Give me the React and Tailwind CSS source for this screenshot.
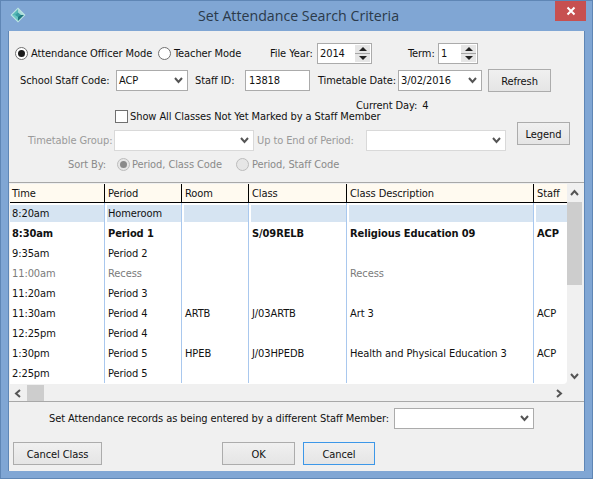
const Chev = ({ dir = "down", color = "#555" }) => {
  const p = { down: "M1 2 L4.5 6 L8 2", up: "M1 6 L4.5 2 L8 6", left: "M6 1 L2 4.5 L6 8", right: "M3 1 L7 4.5 L3 8" }[dir];
  return (
    <svg width="9" height="9" viewBox="0 0 9 9" className="shrink-0">
      <path d={p} fill="none" stroke={color} strokeWidth="2" />
    </svg>
  );
};
const Select = ({ w, value, disabled, className = "" }) => (
  <div className={`h-[21px] flex items-center justify-between shrink-0 bg-white border pl-[2px] pr-[4px] ${disabled ? "border-[#d9d9d9]" : "border-[#ababab]"} ${w} ${className}`}>
    <span>{value}</span>
    <Chev />
  </div>
);
const Btn = ({ w, h = "h-[23px]", children, className = "", blue }) => (
  <div className={`${w} ${h} shrink-0 flex items-center justify-center pt-[2px] border bg-gradient-to-b from-[#f0f0f0] to-[#e5e5e5] ${blue ? "border-[#3c97e8]" : "border-[#acacac]"} ${className}`}>{children}</div>
);
const Radio = ({ on, disabled }) => (
  <span className={`w-[13px] h-[13px] rounded-full border shrink-0 flex items-center justify-center ${disabled ? "border-[#bcbcbc] bg-[#e6e6e6]" : "border-[#707070] bg-white"}`}>
    {on && <span className={`w-[7px] h-[7px] rounded-full ${disabled ? "bg-[#8a8a8a]" : "bg-[#1a1a1a]"}`} />}
  </span>
);
const Spin = ({ w, value, className = "" }) => (
  <div className={`h-[21px] ${w} ${className} shrink-0 border border-[#ababab] bg-white flex items-center justify-between pl-[2px] pr-[1px]`}>
    <span>{value}</span>
    <div className="w-[15px] h-[17px] bg-[#e6e6e6] flex flex-col">
      <div className="h-[8px] flex items-center justify-center"><span className="w-0 h-0 border-x-[4px] border-x-transparent border-b-[4px] border-b-[#222]" /></div>
      <div className="h-px bg-[#a5a5a5]" />
      <div className="h-[8px] flex items-center justify-center"><span className="w-0 h-0 border-x-[4px] border-x-transparent border-t-[4px] border-t-[#222]" /></div>
    </div>
  </div>
);

const cols = ["w-[95px]", "w-[77px]", "w-[67px]", "w-[98px]", "w-[187px]", "w-[34px]"];
const heads = ["Time", "Period", "Room", "Class", "Class Description", "Staff"];
const rows = [
  { c: ["8:20am", "Homeroom", "", "", "", ""], hl: true },
  { c: ["8:30am", "Period 1", "", "S/09RELB", "Religious Education 09", "ACP"], b: true },
  { c: ["9:35am", "Period 2", "", "", "", ""] },
  { c: ["11:00am", "Recess", "", "", "Recess", ""], g: true },
  { c: ["11:20am", "Period 3", "", "", "", ""] },
  { c: ["11:30am", "Period 4", "ARTB", "J/03ARTB", "Art 3", "ACP"] },
  { c: ["12:25pm", "Period 4", "", "", "", ""] },
  { c: ["1:30pm", "Period 5", "HPEB", "J/03HPEDB", "Health and Physical Education 3", "ACP"] },
  { c: ["2:25pm", "Period 5", "", "", "", ""] },
];

export default function App() {
  return (
    <div className="w-[593px] h-[479px] bg-[#80a6d4] border border-[#5f86b5] flex flex-col text-[#111] text-[11px] tracking-[-0.09px] leading-none overflow-hidden whitespace-nowrap [font-stretch:condensed]" style={{ fontFamily: '"DejaVu Sans", sans-serif' }}>
      <div className="h-[30px] shrink-0 flex items-start relative">
        <svg width="16" height="16" viewBox="0 0 16 16" className="ml-[9px] mt-[6px] shrink-0">
          <path d="M8 0.5 L15.5 8 L8 15.5 L0.5 8 Z" fill="#bfe6e4" />
          <path d="M8 2 L14 8 L8 8 Z" fill="#a8dcd8" />
          <path d="M8 2 L2 8 L8 8 Z" fill="#57b8b6" />
          <path d="M2 8 L8 14 L8 8 Z" fill="#6ac6c2" />
          <path d="M14 8 L8 14 L8 8 Z" fill="#1f7780" />
          <path d="M5 8 L8 5.5 L11 8 L8 10 Z" fill="#3a9ea3" />
        </svg>
        <div className="flex-1 text-center text-[14.2px] tracking-normal mt-[7px] text-[#2b3a4a] pl-[16px] leading-[16px]" style={{ fontFamily: '"Open Sans", sans-serif', fontStretch: "normal" }}>Set Attendance Search Criteria</div>
        <div className="w-[31px] h-[20px] bg-[#c75050] mr-[6px] flex items-center justify-center shrink-0">
          <svg width="10" height="10" viewBox="0 0 10 10"><path d="M1.5 1.5 L8.5 8.5 M8.5 1.5 L1.5 8.5" stroke="#fff" strokeWidth="2" /></svg>
        </div>
      </div>
      <div className="w-[577px] ml-[7px] h-[440px] bg-[#f0f0f0] border-x border-[#5f86b5] flex flex-col">
        <div className="flex items-center h-[21px] mt-[12px] ml-[6px]">
          <Radio on />
          <span className="ml-[3px] w-[127px]">Attendance Officer Mode</span>
          <Radio />
          <span className="ml-[3px] w-[96px]">Teacher Mode</span>
          <span className="w-[47px]">File Year:</span>
          <Spin w="w-[55px]" value="2014" />
          <span className="ml-[36px] w-[30px]">Term:</span>
          <Spin w="w-[40px]" value="1" />
        </div>
        <div className="flex items-center h-[21px] mt-[6px] ml-[11px]">
          <span className="w-[96px]">School Staff Code:</span>
          <Select w="w-[72px]" value="ACP" />
          <span className="ml-[7px] w-[50px]">Staff ID:</span>
          <div className="w-[65px] h-[21px] shrink-0 bg-white border border-[#ababab] flex items-center pl-[3px]">13818</div>
          <span className="ml-[8px] w-[80px]">Timetable Date:</span>
          <Select w="w-[84px]" value="3/02/2016" />
          <Btn w="w-[63px]" className="ml-[6px]">Refresh</Btn>
        </div>
        <div className="ml-[347px] mt-[8px] h-[12px] flex items-center gap-[5px]"><span>Current Day:</span><span>4</span></div>
        <div className="ml-[106px] h-[14px] flex items-center mt-[-2px]">
          <span className="w-[13px] h-[13px] bg-white border border-[#707070] shrink-0" />
          <span className="ml-[2px]">Show All Classes Not Yet Marked by a Staff Member</span>
        </div>
        <div className="flex h-[29px] mt-[-1px] ml-[19px] text-[#9a9a9a]">
          <span className="w-[86px] self-end h-[21px] flex items-center">Timetable Group:</span>
          <Select w="w-[140px]" value="" disabled className="self-end" />
          <span className="ml-[3px] w-[109px] self-end h-[21px] flex items-center">Up to End of Period:</span>
          <Select w="w-[140px]" value="" disabled className="self-end" />
          <Btn w="w-[53px]" className="ml-[11px] text-[#111]">Legend</Btn>
        </div>
        <div className="flex items-center h-[20px] mt-[3px] ml-[59px] text-[#8a8a8a]">
          <span className="w-[49px]">Sort By:</span>
          <Radio on disabled />
          <span className="ml-[2px] w-[104px]">Period, Class Code</span>
          <Radio disabled />
          <span className="ml-[3px]">Period, Staff Code</span>
        </div>
        <div className="mt-[8px] h-[220px] border-y border-[#a8a8a8] flex pr-[1px]">
          <div className="w-[558px] flex flex-col pl-[1px]">
            <div className="h-[19px] mt-px flex bg-[#fffaf0] border-b border-black">
              {heads.map((h, i) => (
                <div key={h} className={`${cols[i]} shrink-0 flex items-center pt-[2px] ${i === 0 ? "pl-[2px]" : "pl-[3px]"} ${i < 5 ? "border-r border-black" : ""}`}>{h}</div>
              ))}
            </div>
            <div className="h-[182px] bg-white rounded-br flex flex-col">
              {rows.map((r, ri) => (
                <div key={ri} className={`h-[20px] shrink-0 flex ${r.b ? "font-bold" : ""} ${r.g ? "text-[#7b7b7b]" : ""}`}>
                  {r.c.map((t, i) => (
                    <div key={i} className={`${cols[i]} shrink-0 pt-[2px] pb-[1px] ${i < 5 ? "border-r border-[#a9c8ee]" : ""}`}>
                      <div className={`h-full flex items-center ${i > 0 ? "ml-[2px] pl-[1px]" : "pl-[2px]"} ${r.hl ? "bg-[#d6e4f2]" : ""}`}>{t}</div>
                    </div>
                  ))}
                </div>
              ))}
            </div>
            <div className="h-[16px] flex items-center mt-[1px]">
              <span className="ml-[4px]"><Chev dir="left" /></span>
              <div className="ml-[4px] w-[17px] h-[16px] bg-[#cdcdcd]" />
              <span className="ml-auto mr-[4px]"><Chev dir="right" /></span>
            </div>
          </div>
          <div className="w-[15px] flex flex-col items-center">
            <div className="h-[18px] flex items-center justify-center mt-px"><Chev dir="up" /></div>
            <div className="w-full h-[83px] bg-[#cdcdcd]" />
            <div className="h-[82px]" />
            <div className="h-[18px] flex items-center justify-center"><Chev /></div>
          </div>
        </div>
        <div className="flex items-center h-[21px] mt-[6px] ml-[40px]">
          <span className="w-[345px]">Set Attendance records as being entered by a different Staff Member:</span>
          <Select w="w-[140px]" value="" />
        </div>
        <div className="flex mt-[13px]">
          <Btn w="w-[89px]" className="ml-[4px]">Cancel Class</Btn>
          <Btn w="w-[73px]" className="ml-[120px]">OK</Btn>
          <Btn w="w-[72px]" className="ml-[8px]" blue>Cancel</Btn>
        </div>
      </div>
    </div>
  );
}
